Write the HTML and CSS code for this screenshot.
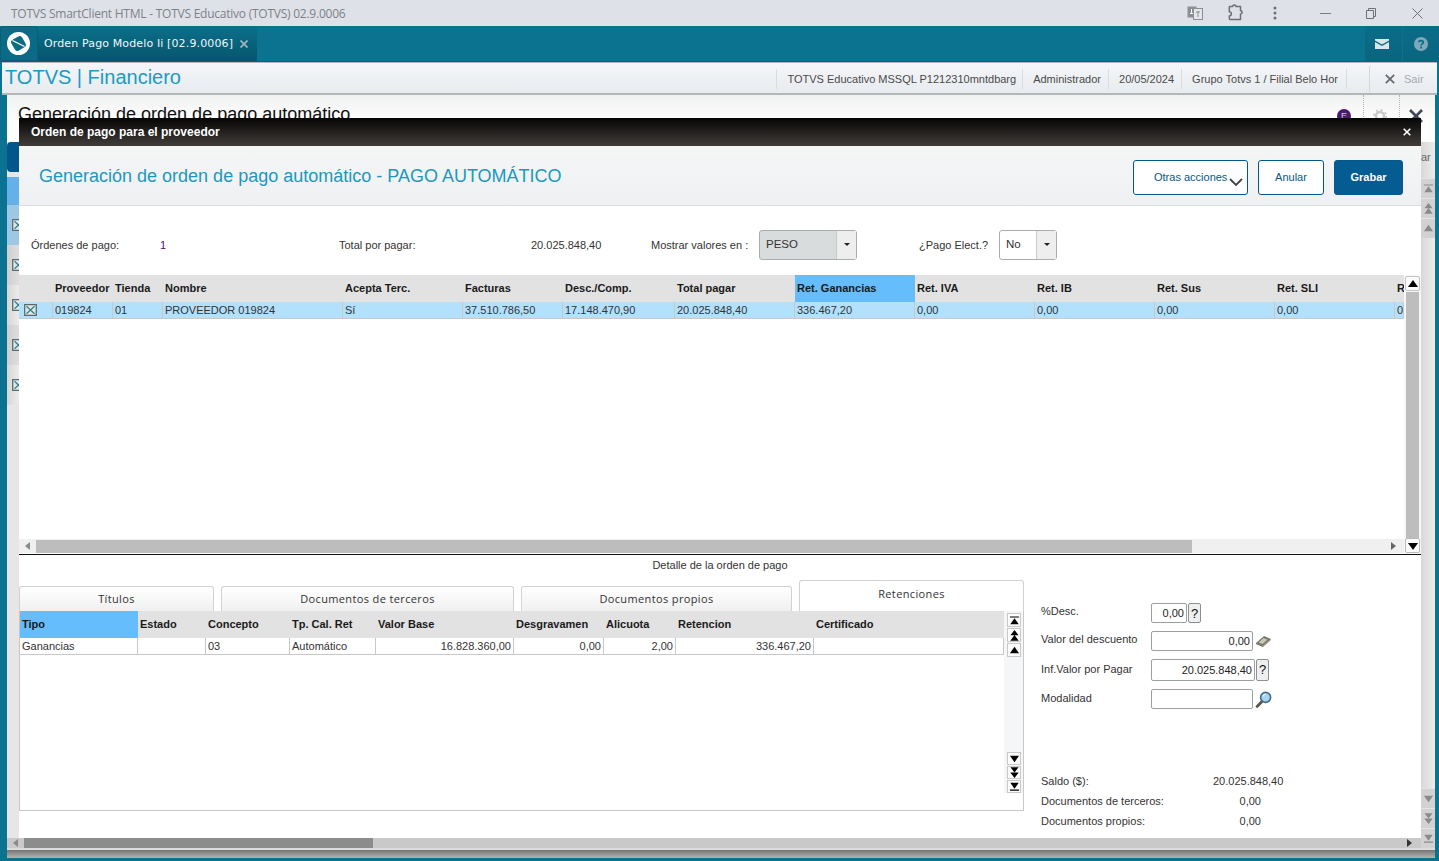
FILE: index.html
```html
<!DOCTYPE html>
<html lang="es">
<head>
<meta charset="utf-8">
<title>TOTVS SmartClient HTML</title>
<link rel="stylesheet" href="styles.css">
</head>
<body>
<svg class="defs" width="0" height="0">
  <symbol id="s-first" viewBox="0 0 12 12"><path d="M1 1.5h10v1.2H1zM6 3.5l4.6 6.5H1.4z"/></symbol>
  <symbol id="s-dbl" viewBox="0 0 12 12"><path d="M6 0l4.4 5.6H1.6zM6 5.4l4.6 6.4H1.4z"/></symbol>
  <symbol id="s-up" viewBox="0 0 12 12"><path d="M6 2l5 7H1z"/></symbol>
  <symbol id="s-down" viewBox="0 0 12 12"><path d="M1 3h10l-5 7z"/></symbol>
  <symbol id="s-dbld" viewBox="0 0 12 12"><path d="M1.6 .4h8.8L6 6zM1.4 6h9.2L6 12z"/></symbol>
  <symbol id="s-last" viewBox="0 0 12 12"><path d="M1.4 2h9.2L6 8.5zM1 9.4h10v1.2H1z"/></symbol>
  <symbol id="s-check" viewBox="0 0 13 12"><path d="M.7.700h11.600v10.600H.7z" fill="#dfe8e8" stroke="#5c6a70" stroke-width="1.300"/><path d="M2.500 2.200l8 7.600M10.500 2.200l-8 7.600" stroke="#2f7f84" stroke-width="1.200" fill="none"/></symbol>
</svg>

<div class="window">
  <header class="titlebar">
    <span class="titlebar-text">TOTVS SmartClient HTML - TOTVS Educativo (TOTVS) 02.9.0006</span>
    <div class="titlebar-tools">
      <svg class="tb-translate" width="16" height="14" viewBox="0 0 16 14"><rect x=".5" y=".5" width="9" height="11" fill="#8b8f94"/><rect x="6.500" y="2.500" width="9" height="11" fill="#e4e6ea" stroke="#8b8f94"/><path d="M3 7.500h3M4.500 3v5" stroke="#fff" fill="none"/><path d="M9 6h4M11 5v6" stroke="#8b8f94" fill="none"/></svg>
      <svg class="tb-puzzle" width="18" height="18" viewBox="0 0 18 18"><path d="M2.500 2.500h3.200a1.600 1.600 0 0 1 3.200 0h4.600v4.200a1.600 1.600 0 0 1 0 3.200v5.600H3.300a1 1 0 0 1-1-1v-2.500c1.500 0 2-1 2-2.200s-.7-2-2-2V3.500z" fill="none" stroke="#6d7176" stroke-width="1.500" stroke-linejoin="round"/></svg>
      <svg class="tb-dots" width="4" height="14" viewBox="0 0 4 14"><circle cx="2" cy="2" r="1.500" fill="#6d7176"/><circle cx="2" cy="7" r="1.500" fill="#6d7176"/><circle cx="2" cy="12" r="1.500" fill="#6d7176"/></svg>
      <svg class="tb-min" width="11" height="1" viewBox="0 0 11 1"><path d="M0 .5h11" stroke="#7a7d82"/></svg>
      <svg class="tb-restore" width="10" height="11" viewBox="0 0 10 11"><path d="M.5 2.500h7v8h-7zM2.500 2.500v-2h7v8h-2" fill="none" stroke="#6d7176"/></svg>
      <svg class="tb-close" width="11" height="11" viewBox="0 0 11 11"><path d="M.5.500l10 10M10.500.500l-10 10" stroke="#6d7176" fill="none"/></svg>
    </div>
  </header>

  <nav class="tabbar">
    <div class="logo-cell">
      <svg width="25" height="25" viewBox="0 0 25 25"><circle cx="12.500" cy="12.500" r="11.500" fill="#fff"/><rect x="6.300" y="6.300" width="12.400" height="12.400" rx="3" transform="rotate(-30 12.500 12.500)" fill="#0b6a85"/><path d="M6.500 9.500l12 6" stroke="#fff" stroke-width="1.300" fill="none"/></svg>
    </div>
    <div class="app-tab">
      <span class="app-tab-name">Orden Pago Modelo Ii [02.9.0006]</span>
      <svg width="8" height="8" viewBox="0 0 8 8"><path d="M.5.500l7 7M7.500.500l-7 7" stroke="#9fb6c0" stroke-width="1.700"/></svg>
    </div>
    <div class="tabbar-tools">
      <div class="tool-cell"><svg width="14" height="10" viewBox="0 0 14 10"><path d="M0 0h14v1.500L7 5.500 0 1.500z" fill="#d9e6ea"/><path d="M0 3l7 4 7-4v7H0z" fill="#d9e6ea"/></svg></div>
      <div class="tool-cell"><svg width="14" height="14" viewBox="0 0 14 14"><circle cx="7" cy="7" r="7" fill="#7fa9ba"/><path d="M4.800 5.300C4.800 3 9.300 3 9.300 5.300c0 1.600-2.200 1.500-2.200 3.200" stroke="#0b6a85" stroke-width="1.700" fill="none"/><rect x="6.200" y="9.600" width="1.800" height="1.800" fill="#0b6a85"/></svg></div>
    </div>
  </nav>

  <section class="modhead">
    <div class="modhead-title">TOTVS | Financiero</div>
    <div class="modhead-info">
      <span class="info info-a">TOTVS Educativo MSSQL P1212310mntdbarg</span>
      <span class="info info-b">Administrador</span>
      <span class="info info-b">20/05/2024</span>
      <span class="info info-last">Grupo Totvs 1 / Filial Belo Hor</span>
      <span class="exit"><svg width="10" height="10" viewBox="0 0 10 10"><path d="M.8.800l8.400 8.400M9.200.800L.8 9.200" stroke="#666c72" stroke-width="1.800"/></svg>Sair</span>
    </div>
  </section>

  <main class="workspace">
    <div class="page">
      <div class="page-top">
        <span class="page-title">Generación de orden de pago automático</span>
        <div class="page-icons">
          <span class="purple-dot">E</span>
          <span class="page-icon"><svg width="14" height="14" viewBox="0 0 14 14"><circle cx="7" cy="7" r="4" fill="none" stroke="#c8c8c8" stroke-width="2.400"/><circle cx="7" cy="7" r="6" fill="none" stroke="#c8c8c8" stroke-width="2" stroke-dasharray="2 2.700"/></svg></span>
          <span class="page-icon"><svg width="14" height="14" viewBox="0 0 14 14"><path d="M1 1l12 12M13 1L1 13" stroke="#3c4858" stroke-width="2.600"/></svg></span>
        </div>
      </div>
      <div class="page-body">
        <div class="rail-left">
          <div class="rail-btn"></div>
          <div class="rail-head"></div>
          <div class="rail-row rail-sel"><svg class="rail-check"><use href="#s-check"/></svg></div>
          <div class="rail-row rail-dark"><svg class="rail-check"><use href="#s-check"/></svg></div>
          <div class="rail-row"><svg class="rail-check"><use href="#s-check"/></svg></div>
          <div class="rail-row rail-dark"><svg class="rail-check"><use href="#s-check"/></svg></div>
          <div class="rail-row"><svg class="rail-check"><use href="#s-check"/></svg></div>
        </div>
        <div class="rail-right">
          <span class="rail-ar">ar</span>
          <div class="rail-scroll">
            <div class="rail-group">
              <span class="rail-arrow"><svg><use href="#s-first"/></svg></span>
              <span class="rail-arrow"><svg><use href="#s-dbl"/></svg></span>
              <span class="rail-arrow"><svg><use href="#s-up"/></svg></span>
            </div>
            <div class="rail-group">
              <span class="rail-arrow"><svg><use href="#s-down"/></svg></span>
              <span class="rail-arrow"><svg><use href="#s-dbld"/></svg></span>
              <span class="rail-arrow"><svg><use href="#s-last"/></svg></span>
            </div>
          </div>
        </div>
      </div>
      <div class="page-hscroll">
        <i class="tri-left"></i>
        <div class="page-thumb"></div>
        <i class="tri-right"></i>
      </div>
      <div class="page-shadow"></div>
    </div>

    <div class="dialog">
      <div class="dlg-title">
        <span>Orden de pago para el proveedor</span>
        <svg width="8" height="8" viewBox="0 0 8 8"><path d="M.7.700l6.600 6.600M7.300.700L.7 7.300" stroke="#fff" stroke-width="1.600"/></svg>
      </div>
      <div class="dlg-head">
        <h1 class="dlg-heading">Generación de orden de pago automático - PAGO AUTOMÁTICO</h1>
        <div class="dlg-actions">
          <button class="btn btn-more"><span class="btn-more-label">Otras acciones</span><svg width="14" height="8" viewBox="0 0 14 8"><path d="M1 1l6 6 6-6" stroke="#444" stroke-width="1.800" fill="none"/></svg></button>
          <button class="btn btn-cancel">Anular</button>
          <button class="btn btn-save">Grabar</button>
        </div>
      </div>

      <div class="filters">
        <span>Órdenes de pago:</span>
        <span class="purple">1</span>
        <span>Total por pagar:</span>
        <span>20.025.848,40</span>
        <span>Mostrar valores en :</span>
        <div class="select select-off"><span class="select-val">PESO</span><span class="select-arrow"><i class="caret"></i></span></div>
        <span></span>
        <span>¿Pago Elect.?</span>
        <div class="select"><span class="select-val">No</span><span class="select-arrow"><i class="caret"></i></span></div>
      </div>

      <div class="maingrid">
        <div class="grid-area">
          <div class="grow ghead cols-main">
            <span></span><span>Proveedor</span><span>Tienda</span><span>Nombre</span><span>Acepta Terc.</span><span>Facturas</span><span>Desc./Comp.</span><span>Total pagar</span><span class="hl">Ret. Ganancias</span><span>Ret. IVA</span><span>Ret. IB</span><span>Ret. Sus</span><span>Ret. SLI</span><span>R</span>
          </div>
          <div class="grow gdata selrow cols-main">
            <span class="chk"><svg width="13" height="12"><use href="#s-check"/></svg></span><span>019824</span><span>01</span><span>PROVEEDOR 019824</span><span>Sí</span><span>37.510.786,50</span><span>17.148.470,90</span><span>20.025.848,40</span><span>336.467,20</span><span>0,00</span><span>0,00</span><span>0,00</span><span>0,00</span><span>0</span>
          </div>
          <div class="grid-fill"></div>
          <div class="hscroll">
            <i class="tri-left"></i>
            <div class="hthumb"></div>
            <i class="tri-right"></i>
          </div>
        </div>
        <div class="vscroll">
          <span class="vbtn"><svg><use href="#s-up"/></svg></span>
          <div class="vthumb"></div>
          <span class="vbtn vbtn-down"><svg><use href="#s-down"/></svg></span>
        </div>
      </div>

      <div class="detail-caption">Detalle de la orden de pago</div>

      <div class="lower">
        <div class="tabs-wrap">
          <div class="tabs">
            <div class="tab tab-a">Títulos</div>
            <div class="tab tab-b">Documentos de terceros</div>
            <div class="tab tab-c">Documentos propios</div>
            <div class="tab tab-d">Retenciones</div>
          </div>
          <div class="tab-panel">
            <div class="sub-area">
              <div class="grow ghead cols-sub">
                <span class="hl">Tipo</span><span>Estado</span><span>Concepto</span><span>Tp. Cal. Ret</span><span>Valor Base</span><span>Desgravamen</span><span>Alicuota</span><span>Retencion</span><span>Certificado</span>
              </div>
              <div class="grow gdata cols-sub">
                <span>Ganancias</span><span></span><span>03</span><span>Automático</span><span class="num">16.828.360,00</span><span class="num">0,00</span><span class="num">2,00</span><span class="num">336.467,20</span><span></span>
              </div>
            </div>
            <div class="sub-scroll">
              <div class="sub-group">
                <span class="sbtn"><svg><use href="#s-first"/></svg></span>
                <span class="sbtn"><svg><use href="#s-dbl"/></svg></span>
                <span class="sbtn"><svg><use href="#s-up"/></svg></span>
              </div>
              <div class="sub-group sub-group-low">
                <span class="sbtn"><svg><use href="#s-down"/></svg></span>
                <span class="sbtn"><svg><use href="#s-dbld"/></svg></span>
                <span class="sbtn"><svg><use href="#s-last"/></svg></span>
              </div>
            </div>
          </div>
        </div>

        <div class="side">
          <div class="form">
            <div class="frow">
              <label class="lbl-up">%Desc.</label>
              <div class="field f-desc">0,00</div>
              <span class="qbtn">?</span>
            </div>
            <div class="frow">
              <label class="lbl-up">Valor del descuento</label>
              <div class="field f-valor">0,00</div>
              <svg class="ficon" width="17" height="12" viewBox="0 0 17 12"><path d="M1 8l8-7 7 3-8 7z" fill="#77786a"/><path d="M1 8l7 3v1l-7-3z" fill="#55564c"/><path d="M3.500 7.500l5-4.500 4 1.700-5 4.300z" fill="#c6c9b0"/><path d="M8 11l8-7v1l-8 7z" fill="#96886a"/></svg>
            </div>
            <div class="frow frow-tall">
              <label>Inf.Valor por Pagar</label>
              <div class="field f-inf">20.025.848,40</div>
              <span class="qbtn qbtn-tall">?</span>
            </div>
            <div class="frow">
              <label>Modalidad</label>
              <div class="field f-valor"></div>
              <svg class="ficon" width="17" height="17" viewBox="0 0 16 16"><path d="M7 9.500L2 14.500" stroke="#5e5344" stroke-width="2.600" stroke-linecap="round"/><circle cx="10" cy="6" r="4.700" fill="#a9d4ee" stroke="#3f6e8e" stroke-width="1.500"/><path d="M7.500 5a3 3 0 0 1 2.500-2" stroke="#fff" fill="none"/></svg>
            </div>
          </div>
          <div class="summary">
            <span>Saldo ($):</span><span class="sval">20.025.848,40</span>
            <span>Documentos de terceros:</span><span class="sval sval-short">0,00</span>
            <span>Documentos propios:</span><span class="sval sval-short">0,00</span>
          </div>
        </div>
      </div>
    </div>
  </main>
</div>
</body>
</html>
```
FILE: styles.css
```css
* { box-sizing: border-box; }
html, body { margin: 0; padding: 0; height: 100%; overflow: hidden; }
body { font-family: "Liberation Sans", Arial, sans-serif; font-size: 11px; color: #222; background: #0b7390; }
.defs { position: absolute; }
.window { display: flex; flex-direction: column; width: 1439px; height: 861px; }

/* title bar */
.titlebar { flex: 0 0 26px; background: #dee1e8; display: flex; align-items: center; justify-content: space-between; padding-left: 11px; }
.titlebar-text { font-family: "Open Sans", sans-serif; font-size: 12px; color: #7d8187; letter-spacing: -.02em; }
.titlebar-tools { display: flex; align-items: center; height: 100%; }
.tb-translate { margin-right: 24px; }
.tb-puzzle { margin-right: 28px; }
.tb-dots { margin-right: 43px; }
.tb-min { margin-right: 35px; }
.tb-restore { margin-right: 36px; }
.tb-close { margin-right: 16px; }

/* tabs */
.tabbar { flex: 0 0 36px; background: #0b7390; display: flex; border-bottom: 1px solid #08607a; }
.logo-cell { width: 38px; display: flex; align-items: center; justify-content: center; padding-right: 2px; background: #0b6a85; border: 1px solid #0a5f78; border-radius: 3px 3px 0 0; }
.app-tab { width: 219px; display: flex; align-items: center; gap: 7px; padding-left: 6px; background: linear-gradient(#0c6f8b, #05566c); border-radius: 3px 3px 0 0; }
.app-tab-name { font-family: "DejaVu Sans", sans-serif; font-size: 11px; color: #eef6f9; letter-spacing: .13px; white-space: nowrap; }
.tabbar-tools { margin-left: auto; display: flex; gap: 1px; }
.tool-cell { width: 37px; padding-right: 3px; display: flex; align-items: center; justify-content: center; background: linear-gradient(#0b6d89, #0a647e); border-radius: 0 0 2px 2px; }
.tool-cell:last-child { width: 36px; padding-right: 0; }

/* module header */
.modhead { flex: 0 0 33px; margin: 0 2px; display: flex; align-items: center; justify-content: space-between; padding-left: 3px; background: linear-gradient(#f4f6f8, #e8ebef); border-top: 1px solid #b4b6b8; border-bottom: 2px solid #b4b6b8; }
.modhead-title { font-size: 20px; color: #199cc2; white-space: nowrap; margin-bottom: 2px; }
.modhead-info { display: flex; align-items: center; height: 100%; padding-top: 1px; }
.info { color: #4a4a4a; padding: 0 8px 0 10px; height: 20px; line-height: 20px; border-left: 1px solid #dadde0; white-space: nowrap; }
.info-a { padding-right: 6px; }
.info-b { padding-right: 7px; }
.info-last { border-right: 1px solid #dadde0; }
.exit { display: flex; align-items: center; gap: 9px; width: 68px; height: 28px; margin-left: 22px; padding-left: 15px; color: #a7aaae; border-left: 1px solid #d4d6d9; border-radius: 3px 0 0 3px; }

/* background page */
.workspace { position: relative; flex: 1 1 auto; min-height: 0; padding: 0 4px 3px 7px; }
.page { height: 100%; display: flex; flex-direction: column; background: #ededed; overflow: hidden; }
.page-top { flex: 0 0 47px; display: flex; justify-content: space-between; background: linear-gradient(#f0f1f1, #fff 60%); padding: 8px 0 0 11px; }
.page-title { font-size: 18px; color: #111; white-space: nowrap; line-height: 22px; }
.page-icons { display: flex; align-items: flex-start; margin-top: -8px; height: 38px; }
.purple-dot { width: 14px; height: 14px; margin-top: 14px; margin-right: 12px; border-radius: 50%; background: #4a1a6a; color: #d8c8e4; font-size: 9px; line-height: 14px; text-align: center; }
.page-icon { width: 36px; height: 38px; padding: 14px 0 0 9px; border-left: 1px dotted #b5b5b5; }
.page-body { flex: 1 1 auto; min-height: 0; margin-bottom: -10px; display: flex; justify-content: space-between; }
.rail-left { width: 12px; display: flex; flex-direction: column; background: #e6e6e6; }
.rail-btn { height: 30px; background: #03568a; border-radius: 4px 0 0 4px; }
.rail-head { height: 28px; margin-top: 5px; background: #64b1e8; }
.rail-row { flex: 0 0 40px; display: flex; align-items: center; background: linear-gradient(90deg, #d6d6d6, #ececec); }
.rail-dark { background: linear-gradient(90deg, #cfcfcf, #dedede); }
.rail-sel { background: #9cc8e4; }
.rail-check { width: 13px; height: 12px; margin-left: 5px; flex: none; }
.rail-right { width: 14px; display: flex; flex-direction: column; background: linear-gradient(90deg, #d8d8d8, #ececec); }
.rail-ar { height: 30px; padding-top: 10px; color: #666; line-height: 10px; }
.rail-scroll { flex: 1 1 auto; display: flex; flex-direction: column; justify-content: space-between; padding-top: 6px; }
.rail-group { display: flex; flex-direction: column; }
.rail-arrow { height: 20px; display: flex; align-items: center; justify-content: center; background: #d2d2d2; border-top: 1px solid #e4e4e4; }
.rail-arrow svg { width: 11px; height: 11px; fill: #8a8a8a; }
.page-hscroll { flex: 0 0 10px; margin-right: 14px; display: flex; align-items: center; background: #c9c9c9; padding-left: 6px; position: relative; }
.page-thumb { width: 349px; height: 10px; margin-left: 6px; background: #8c8c8c; }
.page-hscroll .tri-right { margin-left: auto; margin-right: 9px; border-left-color: #333; }
.page-shadow { flex: 0 0 10px; position: relative; border-top: 2px solid #dcdcdc; background: linear-gradient(#747474, #b4b4b4); }
.tri-left { width: 0; height: 0; border: 4px solid transparent; border-left: 0; border-right: 5px solid #8a8a8a; flex: none; }
.tri-right { width: 0; height: 0; border: 4px solid transparent; border-right: 0; border-left: 5px solid #666; flex: none; }

/* dialog */
.dialog { position: absolute; left: 19px; top: 23px; width: 1402px; height: 720px; display: flex; flex-direction: column; background: #fff; }
.dlg-title { flex: 0 0 28px; display: flex; align-items: center; justify-content: space-between; padding: 0 10px 0 12px; background: linear-gradient(#050505, #423d3a); color: #fff; font-size: 12px; font-weight: bold; }
.dlg-head { flex: 0 0 60px; display: flex; align-items: center; justify-content: space-between; padding: 0 18px 0 20px; background: linear-gradient(#f5f6f6, #eef0f2); border-bottom: 1px solid #dcdcdc; }
.dlg-heading { margin: 1px 0 0; font-size: 18px; font-weight: normal; color: #1b99bd; white-space: nowrap; }
.dlg-actions { display: flex; gap: 10px; margin-top: 4px; }
.btn { height: 35px; border-radius: 3px; border: 1px solid #04588c; background: #fff; color: #04588c; font: 11px "Liberation Sans", Arial, sans-serif; padding: 0; }
.btn-more { width: 115px; padding-left: 20px; display: flex; align-items: center; }
.btn-more-label { margin-bottom: 2px; }
.btn-more svg { margin: 9px 0 0 2px; }
.btn-cancel { width: 66px; padding-bottom: 1px; }
.btn-save { width: 69px; padding-bottom: 1px; background: #045c90; color: #fff; font-weight: bold; }

/* filters */
.filters { flex: 0 0 69px; display: grid; grid-template-columns: 129px 179px 192px 120px 108px 98px 62px 80px 58px; align-items: center; padding: 8px 0 0 12px; white-space: nowrap; color: #333; }
.purple { color: #4b0f7d; }
.select { height: 30px; display: flex; border: 1px solid #a9adb0; border-radius: 3px; background: #fff; }
.select-off { background: #d9dcdd; }
.select-val { flex: 1 1 auto; padding: 0 0 3px 6px; font-size: 11.500px; line-height: 26px; color: #333; }
.select-arrow { width: 20px; display: flex; align-items: center; justify-content: center; background: #eeeeee; border-left: 1px solid #c6c8ca; }
.caret { width: 0; height: 0; border: 3.500px solid transparent; border-bottom: 0; border-top: 3.500px solid #222; }

/* grids */
.maingrid { flex: 0 0 280px; display: flex; border-bottom: 1px solid #111; }
.grid-area { width: 1385px; display: flex; flex-direction: column; overflow: hidden; }
.grow { display: grid; }
.grow > span { padding-left: 2px; white-space: nowrap; overflow: hidden; }
.ghead { height: 27px; background: #e2e2e2; font-weight: bold; line-height: 27px; color: #1a1a1a; }
.ghead .hl { background: #66bdfb; }
.gdata { height: 17px; line-height: 16px; border-bottom: 1px solid #c8c8c8; color: #333; }
.gdata > span { border-right: 1px solid #c8c8c8; }
.selrow { background: #b3e0fb; }
.chk { display: flex; align-items: center; padding-left: 5px !important; }
.cols-main { grid-template-columns: 34px 60px 50px 180px 120px 100px 112px 120px 120px 120px 120px 120px 120px 9px; }
.cols-sub { grid-template-columns: 118px 68px 84px 86px 138px 90px 72px 138px 190px; }
.num { text-align: right; padding-right: 2px; }
.grid-fill { flex: 1 1 auto; }
.hscroll { flex: 0 0 14px; margin-bottom: 1px; display: flex; align-items: center; padding: 0 8px 0 6px; background: #f0f0f0; }
.hthumb { width: 1156px; height: 13px; margin-left: 6px; background: #bdbdbd; }
.hscroll .tri-right { margin-left: auto; }
.vscroll { width: 17px; display: flex; flex-direction: column; background: #f7f7f7; padding: 1px 0; }
.vbtn { height: 15px; flex: none; display: flex; justify-content: center; align-items: center; margin: 0 1px; border: 1px solid #c4c4c4; border-radius: 2px; background: #fbfbfb; }
.vbtn svg { width: 12px; height: 12px; fill: #000; }
.vthumb { flex: 1 1 auto; background: #bdbdbd; margin: 1px 2px 0; }
.vbtn-down { border-color: #bbb; }

/* lower part */
.detail-caption { flex: 0 0 25px; text-align: center; line-height: 21px; color: #333; }
.lower { flex: 1 1 auto; min-height: 0; display: flex; }
.tabs-wrap { width: 1005px; display: flex; flex-direction: column; }
.tabs { flex: 0 0 31px; display: flex; align-items: flex-end; gap: 7px; }
.tab { height: 25px; padding-top: 3px; text-align: center; line-height: 18px; font-family: "Open Sans", sans-serif; font-size: 11px; letter-spacing: .37px; color: #333; background: linear-gradient(#fff, #f0f0f0); border: 1px solid #d2d2d2; border-bottom: 0; border-radius: 3px 3px 0 0; }
.tab-a { width: 195px; }
.tab-b { width: 293px; }
.tab-c { width: 271px; }
.tab-d { width: 225px; height: 32px; padding-top: 4px; line-height: 18px; background: #fff; margin-bottom: -1px; }
.tab-panel { height: 200px; display: flex; border: 1px solid #c8c8c8; border-top: 0; }
.sub-area { width: 984px; }
.sub-scroll { width: 19px; height: 182px; display: flex; flex-direction: column; justify-content: space-between; padding: 2px 2px 0 3px; background: #f5f6f8; }
.sub-group { display: flex; flex-direction: column; gap: 1px; }
.sbtn { height: 14px; display: flex; align-items: center; justify-content: center; background: #fbfbfb; border: 1px solid #c8c8c8; }
.sbtn svg { width: 11px; height: 11px; fill: #000; }
.sub-group-low .sbtn { height: 13px; }
.side { padding: 23px 0 0 17px; flex: 1 1 auto; }
.form { display: flex; flex-direction: column; gap: 8px; }
.frow { display: flex; align-items: center; height: 20px; }
.frow-tall { height: 22px; }
.frow label { width: 110px; margin-bottom: 3px; color: #333; }
.frow .lbl-up { margin-bottom: 5px; }
.field { height: 20px; padding-right: 2px; line-height: 19px; text-align: right; font-size: 11px; background: #fff; border: 1px solid #9aa0a2; border-radius: 2px; color: #222; }
.frow-tall .field { height: 22px; line-height: 21px; }
.f-desc { width: 36px; }
.f-valor { width: 102px; }
.f-inf { width: 104px; }
.qbtn { width: 13px; height: 20px; margin-left: 1px; text-align: center; font-size: 13px; line-height: 19px; background: #efefef; border: 1px solid #8a9093; border-radius: 2px; color: #111; }
.qbtn-tall { height: 22px; line-height: 20px; }
.ficon { margin-left: 2px; flex: none; }
.summary { display: grid; grid-template-columns: 172px 70px; grid-auto-rows: 20px; margin-top: 62px; align-items: center; color: #333; white-space: nowrap; }
.sval { text-align: right; }
.sval-short { padding-right: 22px; }
```
